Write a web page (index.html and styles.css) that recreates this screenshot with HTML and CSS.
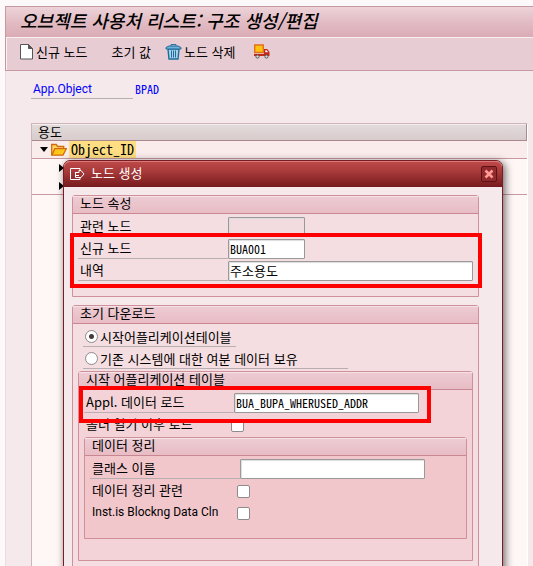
FILE: index.html
```html
<!DOCTYPE html>
<html lang="ko">
<head>
    <meta charset="UTF-8">
    <meta name="viewport" content="width=device-width, initial-scale=1.0">
    <title>오브젝트 사용처 리스트: 구조 생성/편집</title>
    <link rel="stylesheet" href="styles.css">
</head>
<body>
    <div class="window">
        <h1 class="title-bar">오브젝트 사용처 리스트: 구조 생성/편집</h1>
        <div class="toolbar">
            <button type="button" class="tool new-node">
                <svg width="14" height="16" viewBox="0 0 14 16"><path d="M.5 .5h8l4 4v10.500H.5z" fill="#fff" stroke="#555"/><path d="M8.500 .5v4h4z" fill="#555" stroke="#555"/></svg>
                신규 노드
            </button>
            <button type="button" class="tool initial">초기 값</button>
            <button type="button" class="tool delete">
                <svg width="17" height="16" viewBox="0 0 17 16"><path d="M3 5h11l-1 10H4z" fill="#a9d3ea" stroke="#1f6c9c" stroke-width="1.400"/><path d="M6.500 6.500v7M8.500 6.500v7M10.500 6.500v7" stroke="#1f6c9c"/><path d="M1 5V3.500l3-1.500h9l3 1.500V5z" fill="#6fb0d6" stroke="#1f6c9c"/><path d="M6 1.800V.6h5v1.200" fill="none" stroke="#1f6c9c"/></svg>
                노드 삭제
            </button>
            <button type="button" class="tool" aria-label="전송">
                <svg width="16" height="15" viewBox="0 0 16 15"><path d="M.7 1h8.600v7.500H.7z" fill="#ffc20e" stroke="#e0701c" stroke-width="1.400"/><path d="M10 5h3.200l2.300 3v4H0v-2h10z" fill="#c2291b"/><path d="M11.300 6.300h1.500l1.200 2h-2.700z" fill="#fff"/><circle cx="3.500" cy="12.500" r="1.600" fill="#ddd" stroke="#555"/><circle cx="12.500" cy="12.500" r="1.600" fill="#ddd" stroke="#555"/></svg>
            </button>
        </div>

        <div class="content">
            <div class="app-object">
                <span class="app-label latin">App.Object</span>
                <span class="app-value">BPAD</span>
            </div>
            <div class="tree">
                <div class="tree-head">용도</div>
                <div class="tree-row root">
                    <svg width="8" height="5" viewBox="0 0 8 5"><path d="M0 0h8L4 5z"/></svg>
                    <svg class="folder" width="16" height="13" viewBox="0 0 16 13"><path d="M.7 12V1.500h4.500l1.500 2h6V6" fill="#ffd45e" stroke="#d06a10" stroke-width="1.300"/><path d="M.8 12.200L3.800 5.700h11.500L12 12.200z" fill="#ffc61a" stroke="#d06a10" stroke-width="1.300"/></svg>
                    <span class="node-name">Object_ID</span>
                </div>
                <div class="tree-row child"><svg width="5" height="8" viewBox="0 0 5 8"><path d="M0 0v8l5-4z"/></svg></div>
                <div class="tree-row child last"><svg width="5" height="8" viewBox="0 0 5 8"><path d="M0 0v8l5-4z"/></svg></div>
            </div>
        </div>
    </div>

    <div class="dialog" role="dialog" aria-labelledby="dialogTitle">
        <div class="dialog-title">
            <svg width="15" height="12" viewBox="0 0 15 12" fill="none" stroke="#fff"><path d="M10 2.500v-2H.5v11H10v-2"/><path d="M5 4.500h4v-2h2l3 3.500-3 3.500H5.500V4.500M5.500 7.500H9"/></svg>
            <h2 id="dialogTitle">노드 생성</h2>
            <button type="button" class="close" aria-label="닫기">
                <svg width="10" height="10" viewBox="0 0 10 10"><path d="M1.500 1.500l7 7M8.500 1.500l-7 7" stroke="#ff9a94" stroke-width="2.600"/></svg>
            </button>
        </div>

        <form class="dialog-body">
            <section class="group">
                <h3>노드 속성</h3>
                <div class="row">
                    <label for="relatedNode">관련 노드</label>
                    <input type="text" id="relatedNode" class="short" readonly>
                </div>
                <div class="row">
                    <label for="newNode">신규 노드</label>
                    <input type="text" id="newNode" class="short" value="BUA001">
                </div>
                <div class="row">
                    <label for="description">내역</label>
                    <input type="text" id="description" class="long" value="주소용도">
                </div>
                <div class="highlight highlight-node"></div>
            </section>

            <section class="group">
                <h3>초기 다운로드</h3>
                <div class="row radio-row">
                    <label class="radio-short"><input type="radio" name="download" checked>시작어플리케이션테이블</label>
                </div>
                <div class="row radio-row">
                    <label class="radio-long"><input type="radio" name="download">기존 시스템에 대한 여분 데이터 보유</label>
                </div>

                <section class="group level-2">
                    <h3>시작 어플리케이션 테이블</h3>
                    <div class="row">
                        <label for="dataLoad">Appl. 데이터 로드</label>
                        <input type="text" id="dataLoad" class="medium" value="BUA_BUPA_WHERUSED_ADDR">
                    </div>
                    <div class="row check-row">
                        <label for="loadAfter">폴더 열기 이후 로드</label>
                        <input type="checkbox" id="loadAfter">
                    </div>
                    <div class="highlight highlight-load"></div>

                    <section class="group level-3">
                        <h3>데이터 정리</h3>
                        <div class="row">
                            <label for="className">클래스 이름</label>
                            <input type="text" id="className" class="medium">
                        </div>
                        <div class="row check-row">
                            <label for="cleanRelevant">데이터 정리 관련</label>
                            <input type="checkbox" id="cleanRelevant">
                        </div>
                        <div class="row check-row">
                            <label for="blocking" class="latin">Inst.is Blockng Data Cln</label>
                            <input type="checkbox" id="blocking">
                        </div>
                    </section>
                </section>
            </section>
        </form>
    </div>
</body>
</html>
```
FILE: styles.css
```css
* {
    box-sizing: border-box;
}
body {
    margin: 0;
    height: 100vh;
    overflow: hidden;
    position: relative;
    background: #fdf8f9;
    color: #000;
    font-family: "Noto Sans CJK KR", sans-serif;
    font-size: 13px;
    line-height: 18px;
}
svg {
    display: block;
    flex: none;
}
h1, h2, h3 {
    margin: 0;
    font-size: 13px;
    font-weight: normal;
}
button, input {
    font: inherit;
    color: inherit;
    margin: 0;
}
.latin {
    font-family: Roboto, "Noto Sans CJK KR", sans-serif;
    font-size: 12px;
}
.window {
    display: flex;
    flex-direction: column;
    height: 100%;
    padding: 6px 0 0 5px;
}
.title-bar {
    height: 31px;
    padding-left: 14px;
    border: 1px solid #c598a2;
    border-width: 1px 0 0 1px;
    background: linear-gradient(#edd3d9, #e2bcc4 50%, #daabb5);
    font-size: 18px;
    font-weight: 500;
    font-style: italic;
    line-height: 26px;
    white-space: nowrap;
}
.toolbar {
    display: flex;
    align-items: center;
    height: 34px;
    padding: 0 0 4px 14px;
    border: 1px solid #c598a2;
    border-width: 0 0 1px 1px;
    box-shadow: inset 1px 1px #faf0f2;
    background: #e8ccd3;
}
.tool {
    display: flex;
    align-items: center;
    gap: 2px;
    padding: 0;
    border: none;
    background: none;
    white-space: nowrap;
}
.new-node {
    margin-right: 24px;
}
.initial {
    margin-right: 14px;
}
.delete {
    margin-right: 18px;
}
.content {
    flex: 1;
    display: flex;
    flex-direction: column;
    padding: 9px 5px 0 25px;
    border-left: 1px solid #eadde0;
    background: #f5e9eb;
}
.app-object {
    display: flex;
    gap: 2px;
    color: #00f;
}
.app-label {
    width: 102px;
    padding-left: 2px;
    border-bottom: 1px solid #b4afb1;
}
.app-value,
.node-name,
input[type="text"] {
    font-family: "Noto Sans Mono CJK KR", "Noto Sans CJK KR", monospace;
}
.app-value {
    font-size: 12px;
}
.tree {
    flex: 1;
    margin-top: 24px;
    border: 1px solid #cdb6ba;
    border-width: 1px 0 0 1px;
    border-right: 1px solid #fff;
    background: #fff6f6;
}
.tree-head {
    height: 17px;
    padding-left: 6px;
    border: 1px solid #a9898e;
    border-width: 0 1px 1px 0;
    box-shadow: inset 0 1px #f5eeee;
    background: linear-gradient(#e3dbdb, #d8cccd);
    line-height: 16px;
}
.tree-row {
    display: flex;
    align-items: center;
    height: 18px;
}
.root {
    padding-left: 8px;
    border-bottom: 1px solid #c79aa2;
    background: #fbecec;
}
.folder {
    margin: 0 2px 0 3px;
}
.node-name {
    padding: 0 2px;
    background: #ffdd83;
    font-size: 14px;
    line-height: 17px;
}
.child {
    padding-left: 27px;
}
.last {
    border-bottom: 1px solid #c79aa2;
}
.dialog {
    position: absolute;
    top: 160px;
    left: 63px;
    right: 30px;
    border: 1px solid #7a1c21;
    border-radius: 7px 7px 0 0;
    box-shadow: 2px 2px 8px rgba(0, 0, 0, 0.6);
    background: #f5e9eb;
}
.dialog-title {
    display: flex;
    align-items: center;
    gap: 6px;
    height: 26px;
    padding: 0 5px 0 6px;
    border-radius: 6px 6px 0 0;
    box-shadow: inset 0 1px #d77a7b;
    background: linear-gradient(#c04a4a, #a83a3a 40%, #761a1d);
    color: #fff;
}
.dialog-title h2 {
    line-height: 16px;
    padding-bottom: 2px;
}
.close {
    display: flex;
    align-items: center;
    justify-content: center;
    width: 16px;
    height: 16px;
    margin-left: auto;
    padding: 0;
    border: 1px solid #5e1115;
    border-radius: 2px;
    background: #902a2d;
}
.dialog-body {
    padding: 8px 23px 0 8px;
}
.group {
    position: relative;
    margin-bottom: 8px;
    padding-bottom: 14px;
    border: 1px solid #d0909a;
    border-radius: 3px 3px 0 0;
    background: #f4dee1;
}
.group h3 {
    height: 18px;
    margin-bottom: 2px;
    padding-left: 7px;
    border-bottom: 1px solid #c98792;
    box-shadow: inset 0 1px #f6e2e6;
    background: linear-gradient(#edccd3, #e8bcc5);
    line-height: 14px;
}
.level-2 {
    margin: 1px 5px 8px;
    padding-bottom: 13px;
    background: #f3d3d7;
}
.level-3 {
    margin: 1px 5px 8px;
    background: #f2c7cc;
}
.row {
    display: flex;
    align-items: center;
    height: 22px;
    padding-left: 5px;
}
.row label {
    width: 150px;
    height: 20px;
    padding-left: 2px;
    border-bottom: 1px solid #b9aeb1;
    white-space: nowrap;
}
.check-row label {
    width: 147px;
    border-bottom: none;
}
.radio-row {
    padding-left: 10px;
}
.radio-row label {
    display: flex;
    align-items: center;
    gap: 2px;
    line-height: 16px;
}
.radio-row .radio-short {
    width: 153px;
}
.radio-row .radio-long {
    width: 265px;
}
input[type="text"] {
    height: 20px;
    padding: 0 1px 2px;
    border: 1px solid #999;
    border-radius: 1px;
    outline: none;
    box-shadow: inset 1px 1px 1px #ddd;
    background: #fff;
    font-size: 12px;
}
input[type="text"]:read-only {
    background: #f2dce0;
}
.row .short {
    width: 77px;
}
.row .medium {
    width: 185px;
}
.row .long {
    width: 245px;
    font-size: 13px;
}
input[type="radio"],
input[type="checkbox"] {
    appearance: none;
    flex: none;
    width: 13px;
    height: 13px;
    border: 1px solid #8f8a8b;
    background: #fff;
}
input[type="radio"] {
    border-radius: 50%;
}
input[type="radio"]:checked {
    background: radial-gradient(circle, #4a3a3c 2px, #fff 3px);
}
input[type="checkbox"] {
    border-radius: 2px;
}
/* red marker frames */
.highlight {
    position: absolute;
    border: 4px solid #f00;
    pointer-events: none;
}
.highlight-node {
    top: 37px;
    left: -3px;
    right: -4px;
    height: 55px;
}
.highlight-load {
    top: 14px;
    left: 0;
    width: 352px;
    height: 37px;
}
```
